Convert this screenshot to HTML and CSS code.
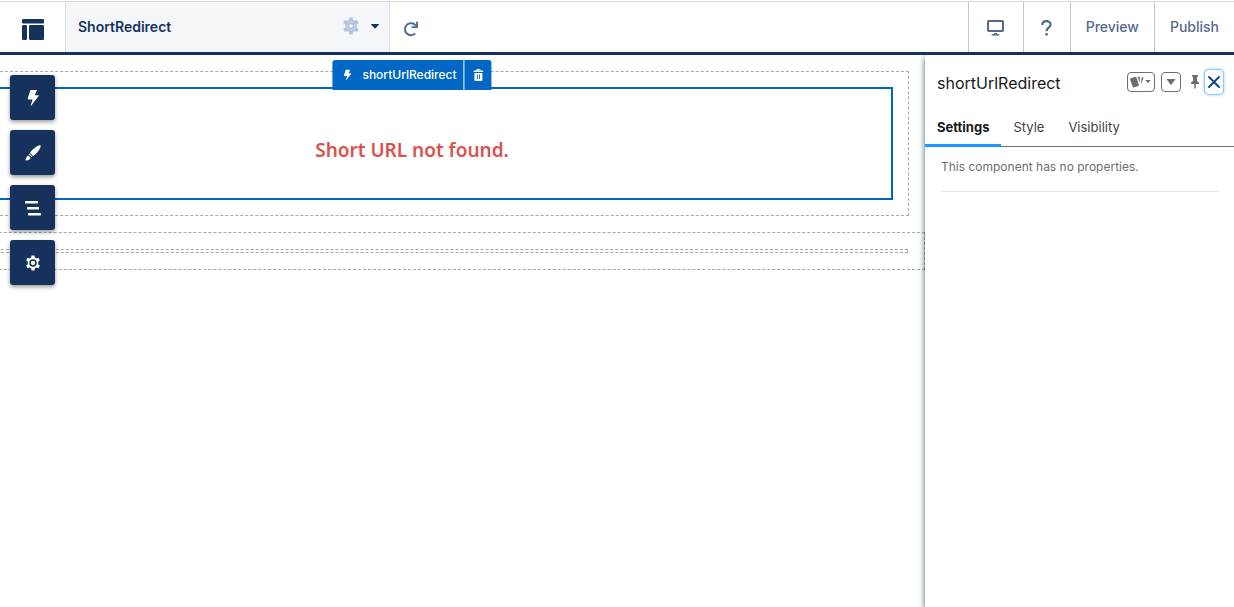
FILE: index.html
```html
<!DOCTYPE html>
<html lang="en">
<head>
<meta charset="utf-8">
<title>ShortRedirect</title>
<link rel="stylesheet" href="styles.css">
</head>
<body>
<svg class="defs" aria-hidden="true">
  <symbol id="bolt" viewBox="0 0 12 16"><path d="M3.500 0H10L7.800 5.200h3.400c.6 0 .8.500.5.900L4.300 15.600c-.3.400-.8.200-.6-.3L5.600 9.400H1.300c-.5 0-.7-.4-.6-.8z"/></symbol>
</svg>
<header class="topbar">
  <a class="logo" href="#" aria-label="Builder home">
    <svg width="22" height="21" viewBox="0 0 22 21"><rect width="22" height="4.500" rx="1.300"/><rect y="6" width="5" height="15" rx="1.300"/><rect x="7" y="6" width="15" height="15" rx="1.300"/></svg>
  </a>
  <button class="page-picker" type="button">
    <span>ShortRedirect</span>
    <svg class="page-gear" width="18" height="18" viewBox="0 0 18 18"><path fill-rule="evenodd" d="M7.400.5h3.200l.5 2.400 1.600.9 2.400-.8 1.600 2.800-1.900 1.700v2.900l1.900 1.700-1.600 2.800-2.400-.8-1.600.9-.5 2.500H7.400L6.900 15l-1.600-.9-2.400.8-1.600-2.800 1.900-1.700V7.500L1.300 5.800l1.600-2.800 2.400.8 1.600-.9zM9 4.600a4.400 4.400 0 1 0 0 8.800 4.400 4.400 0 0 0 0-8.800zM9 5.100a3.900 3.900 0 1 1 0 7.800 3.900 3.900 0 0 1 0-7.800zM9 7.300a1.700 1.700 0 1 0 0 3.400 1.700 1.700 0 0 0 0-3.400z"/></svg>
    <svg width="8" height="5" viewBox="0 0 8 5"><path d="M.5 0h7q.5.200.200.700L4.500 4.200q-.5.400-1 0L.3.700Q0 .2.500 0z"/></svg>
  </button>
  <button class="refresh" type="button" aria-label="Refresh">
    <svg width="16" height="16" viewBox="0 0 16 16"><path d="M12.800 4.600A6 6 0 1 0 12.300 12.400" fill="none" stroke="currentColor" stroke-width="2"/><path d="M13 .8h1.900v6.300H8.600V5.200H13z"/></svg>
  </button>
  <nav class="actions">
    <button class="action device" type="button" aria-label="Device view">
      <svg width="17" height="16" viewBox="0 0 17 16"><rect x="1" y="1" width="15" height="10" rx=".8" fill="none" stroke="currentColor" stroke-width="2"/><path d="M7 13h3v1h1.500q1 0 1 1v.600h-8V15q0-1 1-1H7z"/></svg>
    </button>
    <button class="action help" type="button" aria-label="Help">
      <svg width="11" height="16" viewBox="0 0 11 16"><path d="M1.300 5C1.300 2.400 3 1.200 5.400 1.200S9.600 2.700 9.600 4.700C9.600 7.600 5.600 7.400 5.600 11.300" fill="none" stroke="currentColor" stroke-width="2.200"/><circle cx="5.500" cy="14.300" r="1.400"/></svg>
    </button>
    <button class="action" type="button">Preview</button>
    <button class="action" type="button">Publish</button>
  </nav>
</header>
<div class="workspace">
  <main class="canvas">
    <div class="page">
      <section class="region main-region">
        <div class="component">
          <div class="component-bar">
            <span class="component-name"><svg width="8" height="12"><use href="#bolt"/></svg>shortUrlRedirect</span>
            <button class="delete" type="button" aria-label="Delete">
              <svg width="10" height="12" viewBox="0 0 10 12"><path fill-rule="evenodd" d="M3 1.500V1q0-1 1-1h2q1 0 1 1v.500h2.500q.5 0 .5.500v.900H0V2q0-.5.500-.5zm1 0h2V.9H4zM1 4h8v6.700Q9 12 7.700 12H2.300Q1 12 1 10.700zm2.500 1.500V10h.9V5.500zm2.100 0V10h.9V5.500z"/></svg>
            </button>
          </div>
          <h1>Short URL not found.</h1>
        </div>
      </section>
      <section class="region footer-region"><div class="empty-slot"></div></section>
    </div>
    <nav class="tools">
      <button type="button" aria-label="Components"><svg width="12" height="16"><use href="#bolt"/></svg></button>
      <button type="button" aria-label="Theme"><svg width="16" height="16" viewBox="0 0 16 16"><path d="M14.400.3c1.100-.2 1.600.5 1.200 1.400-1.100 3.400-4.500 7.500-7.500 9.200L5 7.800C7.300 4.600 11.200 1.200 14.400.3zM4.500 8.500l2.900 2.900-1 .7-2.600-2.600zM3.100 10.400l2.500 2.400C5 15 2.600 15.700.5 15.300c-.4-.1-.4-.5 0-.7C1.600 13.800.8 11.300 3.100 10.400z"/></svg></button>
      <button type="button" aria-label="Page structure"><svg width="16" height="16" viewBox="0 0 16 16"><rect x="0" y="1" width="13" height="2.500" rx=".6"/><rect x="2" y="7" width="12" height="2.500" rx=".6"/><rect x="3" y="13" width="13" height="2.500" rx=".6"/></svg></button>
      <button type="button" aria-label="Settings"><svg width="16" height="16" viewBox="0 0 18 18"><path fill-rule="evenodd" d="M7.400.5h3.200l.5 2.400 1.600.9 2.400-.8 1.600 2.800-1.900 1.700v2.900l1.900 1.700-1.600 2.800-2.400-.8-1.600.9-.5 2.500H7.400L6.900 15l-1.600-.9-2.400.8-1.600-2.800 1.900-1.700V7.500L1.300 5.800l1.600-2.800 2.400.8 1.600-.9zM9 4.800a4.200 4.200 0 1 0 0 8.400 4.200 4.200 0 0 0 0-8.400zM9 6.600a2.400 2.400 0 1 1 0 4.800 2.400 2.400 0 0 1 0-4.800z"/></svg></button>
    </nav>
  </main>
  <aside class="panel">
    <div class="panel-head">
      <h2>shortUrlRedirect</h2>
      <button class="boxed wide" type="button" aria-label="Appearance">
        <svg width="22" height="12" viewBox="0 0 22 12"><path d="M.7 2.300 5.500.7Q6.300.5 6.500 1.300l2.300 7.700q.2.800-.6 1l-4.300 1.500q-.8.200-1-.6L0 3.200Q-.1 2.500.7 2.300z"/><path d="M7.700.7h1.500q.8 0 .8.700L9.700 7zM11.700 1.200l1.300.3q.6.200.4.800L10.800 9zM15.200 4h5.400l-2.700 3.300z"/></svg>
      </button>
      <button class="boxed" type="button" aria-label="More actions">
        <svg width="10" height="6" viewBox="0 0 10 6"><path d="M.4 0h9.200L5.500 5.400q-.5.500-1 0z"/></svg>
      </button>
      <button class="pin" type="button" aria-label="Pin">
        <svg width="8" height="14" viewBox="0 0 8 14"><path d="M1 0h6v1.800H6V6l2 1.500v1.400H4.700V13L4 14l-.7-1V8.900H0V7.500L2 6V1.800H1z"/></svg>
      </button>
      <button class="close" type="button" aria-label="Close">
        <svg width="12" height="12" viewBox="0 0 12 12"><path d="M1 1l10 10M11 1L1 11" fill="none" stroke="currentColor" stroke-width="1.800" stroke-linecap="round"/></svg>
      </button>
    </div>
    <div class="tabs" role="tablist">
      <button class="tab active" type="button" role="tab" aria-selected="true">Settings</button>
      <button class="tab" type="button" role="tab" aria-selected="false">Style</button>
      <button class="tab" type="button" role="tab" aria-selected="false">Visibility</button>
    </div>
    <p class="notice">This component has no properties.</p>
  </aside>
</div>
</body>
</html>
```
FILE: styles.css
```css
* { box-sizing: border-box; }
html, body { height: 100%; }
body {
  margin: 0;
  display: flex;
  flex-direction: column;
  overflow: hidden;
  background: #fff;
  color: #16325c;
  font-family: Inter, "Liberation Sans", sans-serif;
  font-size: 14px;
}
button {
  margin: 0;
  padding: 0;
  border: 0;
  background: none;
  color: inherit;
  font: inherit;
  display: flex;
  align-items: center;
  justify-content: center;
}
svg { display: block; fill: currentColor; flex: none; }
.defs { position: absolute; width: 0; height: 0; }

.topbar {
  display: flex;
  flex: none;
  height: 54px;
  margin-top: 1px;
  border-top: 1px solid #dddbda;
  border-bottom: 3px solid #16325c;
}
.logo {
  display: flex;
  align-items: center;
  justify-content: center;
  width: 65px;
  padding-top: 4px;
  color: #16325c;
}
.page-picker {
  width: 325px;
  padding: 0 10px 2px 12px;
  border: solid #d8dde6;
  border-width: 0 1px;
  background: #f4f6f9;
  font-weight: 600;
}
.page-picker span { margin-right: auto; }
.page-gear { margin-right: 11px; color: #b0c4df; }
.refresh { width: 42px; padding-top: 4px; color: #54698d; }
.actions { display: flex; margin-left: auto; color: #54698d; }
.action {
  padding: 0 15px 2px;
  border-left: 1px solid #c9c7c5;
  font-weight: 500;
}
.action.device { width: 55px; padding: 2px 0 0; }
.action.help { width: 47px; padding: 2px 0 0; }

.workspace { display: flex; flex: 1; min-height: 0; }
.canvas { position: relative; flex: 1; min-width: 0; overflow: hidden; }
.page { margin-left: -101px; }
.region { border: 1px dashed #a8a8a8; }
.main-region { margin: 16px; padding: 15px; }
.component {
  position: relative;
  display: flex;
  justify-content: center;
  padding: 46px 0 33px;
  border: 2px solid #0067bd;
}
.component h1 {
  margin: 0;
  color: #d9534f;
  font: 600 19px/30px "Noto Sans", sans-serif;
}
.component-bar {
  position: absolute;
  bottom: 100%;
  left: 50%;
  display: flex;
  height: 30px;
  margin-bottom: -1px;
  transform: translateX(-50%);
  border-radius: 3px 3px 0 0;
  background: #0067c5;
  color: #fff;
  font-size: 12px;
  font-weight: 500;
}
.component-name { display: flex; align-items: center; gap: 11px; padding: 0 7px 1px 11px; }
.delete { width: 28px; border-left: 1px solid #fff; }
.footer-region { padding: 16px; }
.empty-slot { height: 4px; border: 1px dashed #a8a8a8; }

.tools {
  position: absolute;
  top: 20px;
  left: 10px;
  display: grid;
  gap: 10px;
}
.tools button {
  width: 45px;
  height: 45px;
  border-radius: 3px;
  background: #16325c;
  color: #fff;
  box-shadow: 0 2px 4px rgba(0, 0, 0, .4);
}

.panel {
  position: relative;
  flex: none;
  width: 309px;
  border-radius: 4px 0 0;
  background: #fff;
  box-shadow: 0 2px 6px rgba(22, 50, 92, .8);
  clip-path: inset(0 0 0 -12px);
}
.panel-head { display: flex; align-items: center; height: 56px; padding: 0 11px 2px 12px; color: #706e6b; }
.panel-head h2 { margin: 0 auto 0 0; padding-top: 2px; color: #181818; font-size: 16px; font-weight: 400; }
.boxed { width: 20px; height: 20px; margin-right: 10px; border: 1px solid #706e6b; border-radius: 4px; }
.boxed.wide { width: 28px; margin-right: 6px; }
.pin { margin-right: 6px; }
.close {
  width: 18px;
  height: 24px;
  border-radius: 4px;
  color: #014486;
  box-shadow: 0 0 0 1px #8ecbfa, 0 0 3px 1px #8ecbfa;
}
.tabs { display: flex; height: 36px; border-bottom: 1px solid #706e6b; }
.tab { height: 36px; padding: 0 12px 2px; border-bottom: 3px solid transparent; color: #444; font-size: 13px; }
.tab.active { border-color: #1b96ff; color: #181818; font-weight: 700; }
.notice {
  margin: 0 15px 0 16px;
  padding: 11px 0 15px;
  border-bottom: 1px solid #e5e5e5;
  color: #706e6b;
  font-size: 12px;
  line-height: 18px;
}
```
